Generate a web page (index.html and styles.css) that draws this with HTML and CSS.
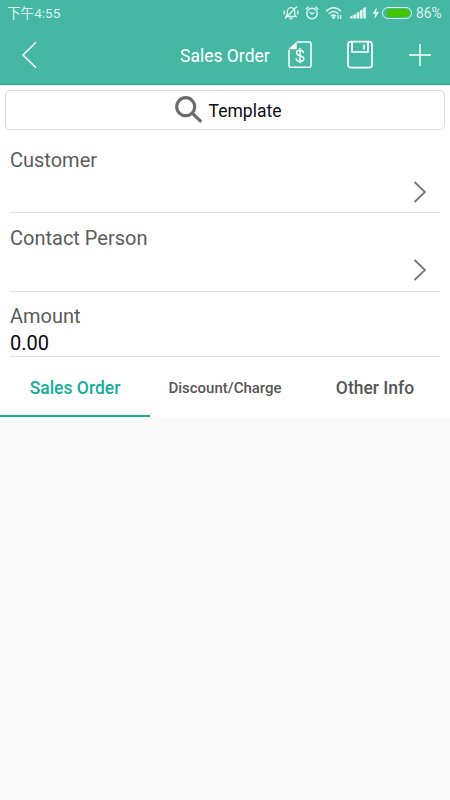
FILE: index.html
```html
<!DOCTYPE html>
<html lang="en">
<head>
<meta charset="utf-8">
<title>Sales Order</title>
<link rel="stylesheet" href="styles.css">
</head>
<body>
<header class="header">
  <div class="status">
    <span class="time">下午4:55</span>
    <svg class="muted" width="16" height="16" viewBox="0 0 16 16"><path d="M3 11.500h10L11.700 9.500V6.300a3.700 3.700 0 0 0-7.400 0v3.200zM6.500 13.500h3M1.200 5.500v4M14.800 5.500v4M14 1.500 2 13.500"/></svg>
    <svg class="alarm" width="16" height="16" viewBox="0 0 16 16"><circle cx="8" cy="8.500" r="5.200"/><path d="M1.800 4.500 4.500 1.800M14.200 4.500 11.500 1.800M5.500 7 8 9l2.500-1.500"/></svg>
    <svg class="wifi" width="18" height="16" viewBox="0 0 18 16"><path d="M1.200 6.200Q8.500-.8 16 6.200M3.600 8.700q4.900-4.600 9.900 0M5.900 11.200q2.600-2.400 5.300 0M13.200 10v4M15.700 10v4"/><circle class="solid" cx="8.600" cy="12.500" r="1.500"/></svg>
    <svg class="signal" width="16" height="12" viewBox="0 0 16 12"><path class="solid" d="M0 11.500V9.500l2.700-1v3zM3.300 11.500v-3.500l2.700-1v4.500zM6.600 11.500V5.700l2.700-1v6.800zM9.900 11.500V3.500l2.700-1v9zM13.200 11.500V1l2.700-1v11.500z"/></svg>
    <svg class="bolt" width="8" height="12" viewBox="0 0 8 12"><path class="solid" d="M4.800 0 .5 6.800h2.700L2.500 12l4.700-7H4.300z"/></svg>
    <span class="battery"><span class="charge"></span></span>
    <span class="percent">86%</span>
  </div>
  <div class="toolbar">
    <svg class="back" width="20" height="30" viewBox="0 0 20 30"><path d="M16 2.200 3 15l13 12.800"/></svg>
    <h1 class="title">Sales Order</h1>
    <svg class="quote" width="26" height="30" viewBox="0 0 26 30"><path d="M10 2h12.500Q24 2 24 3.500v22.200q0 1.500-1.500 1.500h-19Q2 27.200 2 25.700V10"/><path class="solid" d="M1.400 9.300 9.700 1.400V9.300z"/><path class="dollar" d="M16.600 13.200c-.2-2-1.500-3-3.600-3-2.300 0-3.500 1.200-3.500 2.700 0 3.700 7.300 2 7.300 5.700 0 1.700-1.400 2.800-3.700 2.800-2.400 0-3.900-1.200-4-3.200M13 8v15.300"/></svg>
    <svg class="save" width="28" height="30" viewBox="0 0 28 30"><rect x="2" y="1.700" width="24" height="26" rx="3"/><path d="M6 2v10h16V2M18 4.500v5"/></svg>
    <svg class="plus" width="22" height="22" viewBox="0 0 22 22"><path d="M0 11h22M11 0v22"/></svg>
  </div>
</header>
<main class="form">
  <button class="template">
    <svg width="28" height="28" viewBox="0 0 28 28"><circle cx="10.700" cy="10.700" r="9"/><path d="m17 17 9.300 8.800"/></svg>
    <span class="template-name">Template</span>
  </button>
  <div class="field">
    <span class="label">Customer</span>
    <svg class="next" width="14" height="22" viewBox="0 0 14 22"><path d="M1.500 1 12 11 1.500 21"/></svg>
  </div>
  <div class="field contact">
    <span class="label">Contact Person</span>
    <svg class="next" width="14" height="22" viewBox="0 0 14 22"><path d="M1.500 1 12 11 1.500 21"/></svg>
  </div>
  <div class="field amount">
    <span class="label">Amount</span>
    <span class="value">0.00</span>
  </div>
  <nav class="tabs">
    <a class="tab active">Sales Order</a>
    <a class="tab small">Discount/Charge</a>
    <a class="tab">Other Info</a>
  </nav>
</main>
</body>
</html>
```

FILE: styles.css
```css
* { box-sizing: border-box; }
body {
  margin: 0;
  min-height: 800px;
  background: #fafafa;
  font-family: Roboto, "Noto Sans CJK SC", sans-serif;
}
svg {
  display: block;
  flex: none;
  fill: none;
  stroke: #fff;
}
.solid { fill: #fff; stroke: none; }
.header {
  height: 85px;
  background: #45b8a3;
  border-bottom: 1px solid #08a794;
  color: #fff;
}
.status {
  display: flex;
  align-items: center;
  height: 26px;
  padding-left: 7px;
  color: #def3ef;
  font-size: 13px;
}
.status svg { stroke: #dcf3ee; stroke-width: 1.4; }
.status .solid { fill: #dcf3ee; stroke: none; }
.time { width: 276px; margin-top: -2px; font-size: 13.6px; }
.alarm { margin-left: 5px; }
.wifi { margin-left: 5px; }
.signal { margin-left: 7px; }
.bolt { margin-left: 6px; }
.battery {
  width: 30px;
  height: 12px;
  margin-left: 2px;
  padding: 1px;
  border: 1px solid #dcf3ee;
  border-radius: 6px;
}
.charge {
  display: block;
  width: 23px;
  height: 8px;
  margin-left: auto;
  border-radius: 1px 4px 4px 1px;
  background: #44c400;
}
.percent { margin-left: 4px; font-size: 13.8px; }
.toolbar {
  display: flex;
  align-items: center;
  height: 58px;
  padding-left: 20px;
}
.back { stroke-width: 1.6; }
.title {
  width: 92px;
  margin: 0 0 0 140px;
  padding-top: 2px;
  font-size: 17.5px;
  font-weight: 400;
  white-space: nowrap;
}
.quote { margin-left: 15px; stroke-width: 1.5; }
.dollar { stroke-width: 1.4; }
.save { margin-left: 33px; stroke-width: 1.7; }
.plus { margin-left: 35px; stroke-width: 1.4; }
.form { height: 332px; background: #fff; padding-top: 5px; }
.template {
  display: flex;
  align-items: center;
  justify-content: center;
  gap: 6px;
  width: 440px;
  height: 40px;
  margin: 0 5px;
  padding: 0 0 0 6px;
  border: 1px solid #dedede;
  border-radius: 5px;
  background: #fff;
  color: #0b0d19;
  font: 17.5px Roboto, sans-serif;
}
.template-name { padding-top: 2px; }
.template svg { stroke: #6b6b6b; stroke-width: 3.2; }
.field {
  display: flex;
  flex-direction: column;
  height: 83px;
  margin: 0 10px;
  padding-top: 18px;
  border-bottom: 1px solid #e2e2e2;
}
.label {
  height: 24px;
  color: #5c5c5c;
  font-size: 20px;
  line-height: 24px;
}
.next { align-self: flex-end; margin: 9px 13px 0 0; stroke: #777; stroke-width: 1.8; }
.contact { height: 79px; padding-top: 13px; }
.contact .next { margin-top: 9px; }
.amount { height: 65px; padding-top: 12px; }
.value { color: #050812; font-size: 20px; line-height: 31px; }
.tabs { display: flex; height: 60px; }
.tab {
  width: 150px;
  color: #565656;
  font-size: 17.5px;
  font-weight: 500;
  line-height: 62px;
  text-align: center;
}
.tab.small { font-size: 15px; }
.tab.active { border-bottom: 2px solid #12ae98; color: #12ae98; }
```
